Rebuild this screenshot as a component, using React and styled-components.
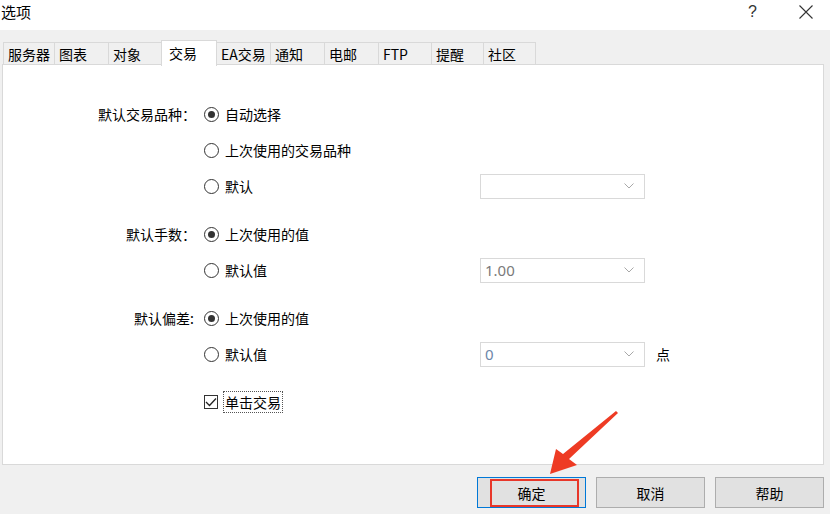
import React from "react";
import styled, { createGlobalStyle } from "styled-components";

const Global = createGlobalStyle`
  html, body { margin: 0; padding: 0; background: #f0f0f0; }
  body { font-family: "Noto Sans CJK SC", "Noto Sans", sans-serif; color: #000; }
  * { box-sizing: border-box; }
`;

const Window = styled.div`
  position: relative;
  width: 830px;
  height: 514px;
  display: flex;
  flex-direction: column;
  background: #f0f0f0;
  overflow: hidden;
`;

const TitleBar = styled.div`
  height: 30px;
  background: #fff;
  display: flex;
  align-items: flex-start;
  padding: 2px 0 0 1px;
`;

const Title = styled.div`
  font-size: 15px;
  line-height: 20px;
  flex: 1;
`;

const HelpMark = styled.div`
  font-family: "Liberation Sans", sans-serif;
  font-size: 16px;
  line-height: 20px;
  color: #333;
  width: 10px;
  margin-right: 40px;
`;

const CloseBox = styled.div`
  width: 16px;
  height: 16px;
  margin: 2px 16px 0 0;
  display: flex;
`;

const Body = styled.div`
  flex: 1;
  display: flex;
  flex-direction: column;
  padding: 10px 6px 0 2px;
`;

const TabStrip = styled.div`
  display: flex;
  align-items: flex-end;
  height: 25px;
  padding-left: 1px;
  position: relative;
  z-index: 2;
`;

const Tab = styled.div`
  width: ${(p) => p.$w}px;
  height: ${(p) => (p.$active ? 26 : 23)}px;
  padding-left: ${(p) => (p.$active ? 7 : 4)}px;
  font-size: 14px;
  line-height: ${(p) => (p.$active ? 25 : 22)}px;
  background: ${(p) => (p.$active ? "#fff" : "#f0f0f0")};
  border: 1px solid #d9d9d9;
  border-bottom: ${(p) => (p.$active ? "none" : "1px solid #d9d9d9")};
  margin-left: -1px;
  margin-bottom: ${(p) => (p.$active ? -1 : 0)}px;
  white-space: nowrap;
  &:first-child { margin-left: 0; }
`;

const Panel = styled.div`
  height: 401px;
  background: #fff;
  border: 1px solid #d9d9d9;
  margin-top: -1px;
  padding-top: 31px;
  display: flex;
  flex-direction: column;
  gap: 12px;
`;

const Section = styled.div`
  display: flex;
  flex-direction: column;
`;

const Row = styled.div`
  display: grid;
  grid-template-columns: 201px 276px 165px 1fr;
  height: 36px;
  align-items: center;
`;

const Label = styled.div`
  font-size: 14px;
  text-align: right;
  padding-right: ${(p) => p.$pr || 8}px;
  white-space: nowrap;
`;

const Choice = styled.div`
  display: flex;
  align-items: center;
  gap: 6px;
  font-size: 14px;
  white-space: nowrap;
`;

const RadioCircle = styled.span`
  width: 15px;
  height: 15px;
  border: 1px solid #333;
  border-radius: 50%;
  display: flex;
  align-items: center;
  justify-content: center;
  flex: none;
  &::after {
    content: "";
    width: 7px;
    height: 7px;
    border-radius: 50%;
    background: ${(p) => (p.$checked ? "#333" : "transparent")};
  }
`;

const CheckBox = styled.span`
  width: 14px;
  height: 14px;
  border: 1px solid #333;
  display: flex;
  align-items: center;
  justify-content: center;
  flex: none;
`;

const FocusText = styled.span`
  border: 1px dotted #555;
  padding: 0 1px;
  line-height: 20px;
  margin-left: -1px;
`;

const Select = styled.div`
  height: 25px;
  border: 1px solid #d9d9d9;
  background: #fff;
  display: flex;
  align-items: center;
  padding: 0 10px 0 4px;
  font-family: "Noto Sans", "Liberation Sans", sans-serif;
  font-size: 15px;
  color: ${(p) => p.$color || "#7a7a7a"};
`;

const SelectValue = styled.span`
  flex: 1;
`;

const Unit = styled.div`
  font-size: 14px;
  padding-left: 11px;
`;

const ButtonRow = styled.div`
  display: flex;
  justify-content: flex-end;
  gap: 10px;
  margin-top: 12px;
`;

const Button = styled.div`
  position: relative;
  width: 109px;
  height: 31px;
  background: #e1e1e1;
  border: 1px solid ${(p) => (p.$default ? "#0078d7" : "#adadad")};
  display: flex;
  align-items: center;
  justify-content: center;
  font-size: 14px;
`;

const Highlight = styled.span`
  position: absolute;
  left: 12px;
  right: 6px;
  top: 1px;
  bottom: 0px;
  border: 2px solid #e8372a;
`;

const Overlay = styled.svg`
  position: absolute;
  left: 0;
  top: 0;
  pointer-events: none;
`;

const Chevron = () => (
  <svg width="10" height="6" viewBox="0 0 10 6">
    <path d="M0.5 0.5 L5 5 L9.5 0.5" fill="none" stroke="#a8a8a8" strokeWidth="1" />
  </svg>
);

const tabs = [
  ["服务器", 52],
  ["图表", 55],
  ["对象", 54],
  ["交易", 56],
  ["EA交易", 55],
  ["通知", 55],
  ["电邮", 55],
  ["FTP", 54],
  ["提醒", 53],
  ["社区", 53],
];

const Radio = ({ checked, children }) => (
  <Choice>
    <RadioCircle $checked={checked} />
    {children}
  </Choice>
);

export default function App() {
  return (
    <>
      <Global />
      <Window>
        <TitleBar>
          <Title>选项</Title>
          <HelpMark>?</HelpMark>
          <CloseBox>
            <svg width="16" height="16" viewBox="0 0 16 16">
              <path d="M1.5 1.5 L14.5 14.5 M14.5 1.5 L1.5 14.5" stroke="#333" strokeWidth="1.1" />
            </svg>
          </CloseBox>
        </TitleBar>
        <Body>
          <TabStrip>
            {tabs.map(([t, w]) => (
              <Tab key={t} $w={w} $active={t === "交易"}>
                {t}
              </Tab>
            ))}
          </TabStrip>
          <Panel>
            <Section>
              <Row>
                <Label>默认交易品种：</Label>
                <Radio checked>自动选择</Radio>
              </Row>
              <Row>
                <span />
                <Radio>上次使用的交易品种</Radio>
              </Row>
              <Row>
                <span />
                <Radio>默认</Radio>
                <Select>
                  <SelectValue />
                  <Chevron />
                </Select>
              </Row>
            </Section>
            <Section>
              <Row>
                <Label>默认手数：</Label>
                <Radio checked>上次使用的值</Radio>
              </Row>
              <Row>
                <span />
                <Radio>默认值</Radio>
                <Select>
                  <SelectValue>1.00</SelectValue>
                  <Chevron />
                </Select>
              </Row>
            </Section>
            <Section>
              <Row>
                <Label $pr={10}>默认偏差:</Label>
                <Radio checked>上次使用的值</Radio>
              </Row>
              <Row>
                <span />
                <Radio>默认值</Radio>
                <Select $color="#6d86a8">
                  <SelectValue>0</SelectValue>
                  <Chevron />
                </Select>
                <Unit>点</Unit>
              </Row>
            </Section>
            <Section>
              <Row>
                <span />
                <Choice>
                  <CheckBox>
                    <svg width="12" height="10" viewBox="0 0 12 10">
                      <path d="M1 5 L4.5 8.5 L11 1.5" fill="none" stroke="#222" strokeWidth="1.3" />
                    </svg>
                  </CheckBox>
                  <FocusText>单击交易</FocusText>
                </Choice>
              </Row>
            </Section>
          </Panel>
          <ButtonRow>
            <Button $default>
              确定
              <Highlight />
            </Button>
            <Button>取消</Button>
            <Button>帮助</Button>
          </ButtonRow>
        </Body>
        <Overlay width="830" height="514" viewBox="0 0 830 514">
          <polygon
            points="550,474 556,449 563,454 616,411 618,413 569,459 577,465"
            fill="#ee3b24"
          />
        </Overlay>
      </Window>
    </>
  );
}
